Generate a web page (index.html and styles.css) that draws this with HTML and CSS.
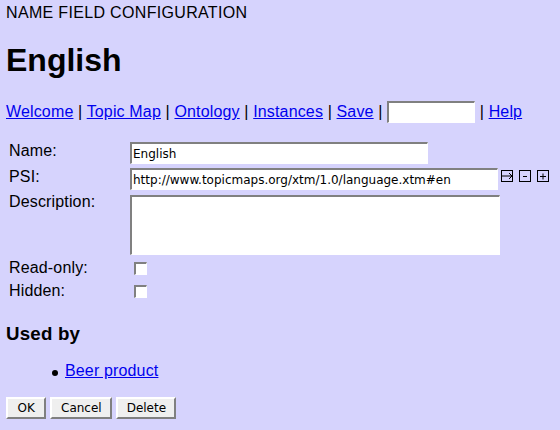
FILE: index.html
```html
<!DOCTYPE html>
<html>
<head>
<meta charset="utf-8">
<title>Name field configuration</title>
<link rel="stylesheet" href="styles.css">
</head>
<body>
<div class="crumb">NAME FIELD CONFIGURATION</div>
<h1 class="title">English</h1>
<div class="nav"><a href="#">Welcome</a> | <a href="#">Topic Map</a> | <a href="#">Ontology</a> | <a href="#">Instances</a> | <a href="#">Save</a> | <input class="search" type="text"> | <a href="#">Help</a></div>
<form class="fields">
  <div class="row row-name">
    <label class="lbl">Name:</label>
    <input class="txt name" type="text" value="English">
  </div>
  <div class="row row-psi">
    <label class="lbl">PSI:</label>
    <input class="txt psi" type="text" value="http://www.topicmaps.org/xtm/1.0/language.xtm#en">
    <span class="icons">
      <svg class="ico" width="12" height="12" viewBox="0 0 12 12"><rect x="0.5" y="0.5" width="11" height="11" fill="none" stroke="#000"/><path d="M0 6H11M8 3L11 6L8 9" fill="none" stroke="#000"/></svg>
      <svg class="ico" width="12" height="12" viewBox="0 0 12 12"><rect x="0.5" y="0.5" width="11" height="11" fill="none" stroke="#000"/><path d="M4 6.5H8" fill="none" stroke="#000"/></svg>
      <svg class="ico" width="12" height="12" viewBox="0 0 12 12"><rect x="0.5" y="0.5" width="11" height="11" fill="none" stroke="#000"/><path d="M3 6.5H9M6 3.5V9.5" fill="none" stroke="#000"/></svg>
    </span>
  </div>
  <div class="row row-desc">
    <label class="lbl">Description:</label>
    <textarea class="txt desc"></textarea>
  </div>
  <div class="row row-ro">
    <label class="lbl">Read-only:</label>
    <input class="chk" type="checkbox">
  </div>
  <div class="row row-hid">
    <label class="lbl">Hidden:</label>
    <input class="chk" type="checkbox">
  </div>
</form>
<h3 class="sub">Used by</h3>
<ul class="used">
  <li class="used-item"><a href="#">Beer product</a></li>
</ul>
<div class="buttons">
  <button class="btn btn-ok" type="button">OK</button>
  <button class="btn btn-cancel" type="button">Cancel</button>
  <button class="btn btn-delete" type="button">Delete</button>
</div>
</body>
</html>
```

FILE: styles.css
```css
html { background: #d6d3fd; }
body {
  margin: 0;
  padding: 4px 6px 0;
  background: #d6d3fd;
  color: #000;
  font-family: "Liberation Sans", Arial, sans-serif;
  font-size: 16px;
  line-height: 18px;
  letter-spacing: 0.15px;
}
a { color: #0000ee; text-decoration: underline; }

.crumb { margin: 0; letter-spacing: 0.33px; }

.title {
  margin: 20px 0 0;
  font-size: 32px;
  line-height: 37px;
  font-weight: bold;
  letter-spacing: 0;
}

.nav {
  margin-top: 22px;
  height: 22px;
  line-height: 22px;
  white-space: nowrap;
}
.search {
  box-sizing: border-box;
  width: 88px;
  height: 22px;
  margin: 0;
  vertical-align: top;
  background: #fff;
  border-style: solid;
  border-width: 2px 1px 1px 2px;
  border-color: #808080 #fff #fff #808080;
  padding: 0 2px;
}

.fields {
  margin: 19px 0 0;
  padding-left: 3px;
}
.row { display: flex; align-items: flex-start; }
.lbl { width: 121px; flex: none; line-height: 18px; }
.row-psi { margin-top: 4px; }
.row-desc { margin-top: 3px; }
.row-ro { margin-top: 4px; }
.row-hid { margin-top: 5px; }

.txt {
  box-sizing: border-box;
  margin: 0;
  background: #fff;
  border-style: solid;
  border-width: 2px 1px 1px 2px;
  border-color: #808080 #fff #fff #808080;
  font-family: "DejaVu Sans", Verdana, sans-serif;
  font-size: 12px;
  letter-spacing: 0;
  color: #000;
  padding: 0 1px;
  outline: none;
}
.name { width: 298px; height: 22px; }
.psi { width: 368px; height: 22px; }
.desc { width: 370px; height: 60px; margin-top: 2px; resize: none; }

.icons { display: flex; gap: 6px; margin: 2px 0 0 3px; }
.ico { display: block; }

.chk {
  -webkit-appearance: none;
  appearance: none;
  box-sizing: border-box;
  width: 13px;
  height: 13px;
  margin: 3px 0 0 4px;
  background: #fff;
  border-style: solid;
  border-width: 2px 1px 1px 2px;
  border-color: #808080 #fff #fff #808080;
}

.sub {
  margin: 23px 0 0;
  font-size: 18.72px;
  line-height: 22px;
  font-weight: bold;
  letter-spacing: 0.2px;
}

.used {
  margin: 17px 0 0;
  padding-left: 46px;
  list-style: none;
}
.used-item { display: flex; align-items: flex-start; }
.used-item::before {
  content: "";
  width: 6px;
  height: 6px;
  margin: 8px 7px 0 0;
  border-radius: 50%;
  background: #000;
  flex: none;
}

.buttons { margin-top: 17px; display: flex; gap: 4px; }
.btn {
  box-sizing: border-box;
  height: 22px;
  margin: 0;
  padding: 0 8px;
  background: #efefef;
  border-style: solid;
  border-width: 2px;
  border-color: #fff #808080 #808080 #fff;
  font-family: "DejaVu Sans", Verdana, sans-serif;
  font-size: 12px;
  letter-spacing: 0;
  color: #000;
}
.btn-ok { padding: 0 9.5px; }
.btn-cancel { padding: 0 8.7px; }
.btn-delete { padding: 0 8.3px; }
```
